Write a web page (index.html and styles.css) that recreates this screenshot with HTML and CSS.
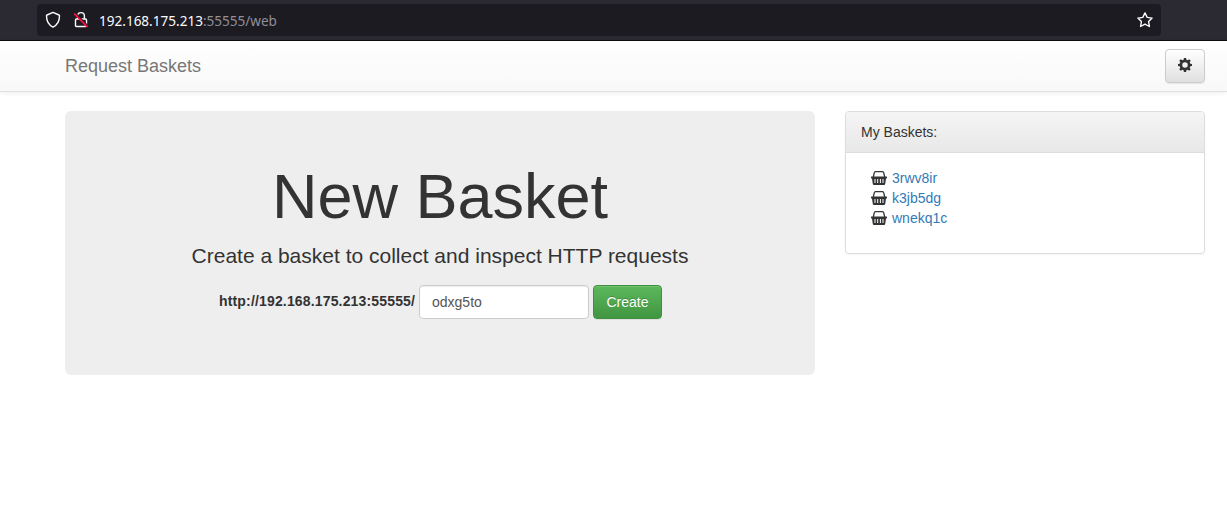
FILE: index.html
```html
<!DOCTYPE html>
<html lang="en">
<head>
<meta charset="utf-8">
<title>Request Baskets</title>
<link rel="stylesheet" href="styles.css">
</head>
<body>
<svg class="defs" width="0" height="0" aria-hidden="true">
  <symbol id="basket" viewBox="0 0 16 14">
    <path d="M2.300 6 3.300 1.700Q3.500.7 4.500.7h7q1 0 1.200 1L13.700 6" fill="none" stroke="#333" stroke-width="1.300"/>
    <path fill="#333" fill-rule="evenodd" d="M.5 5.500h15q.5 0 .5.500v1q0 .5-.500.500H15l-.8 5.500q-.2 1-1.200 1H3q-1 0-1.200-1L1 7.500H.5Q0 7.500 0 7V6Q0 5.500 .5 5.500zM3.500 8v4h1V8zM6.200 8v4h1V8zM8.900 8v4h1V8zM11.500 8v4h1V8z"/>
  </symbol>
</svg>
<div class="browser-bar">
  <div class="url-field">
    <svg class="shield" width="16" height="18" viewBox="0 0 16 18"><path d="M8 1.400 14 4q.5.200.5.800C14.500 10 12.700 13.900 8 16.100 3.300 13.900 1.500 10 1.500 4.800q0-.6.5-.8z" fill="none" stroke="#fbfbfe" stroke-width="1.400" stroke-linejoin="round"/></svg>
    <svg class="lock" width="16" height="18" viewBox="0 0 16 18"><path d="M4.600 8V5a3.400 3.400 0 0 1 6.800 0V8M3.500 8h9q1 0 1 1v5.500q0 1-1 1h-9q-1 0-1-1V9q0-1 1-1z" fill="none" stroke="#fbfbfe" stroke-width="1.400"/><path d="M2.500 2.200 14.800 14.700" stroke="#1c1b22" stroke-width="1.600"/><path d="M1.200 2.600 14.700 16.200" stroke="#ff0f3f" stroke-width="1.700"/></svg>
    <span class="url">192.168.175.213<span class="url-rest">:55555/web</span></span>
    <svg class="star" width="18" height="18" viewBox="0 0 18 18"><path d="m9 1.900 2.200 4.500 4.900.7-3.500 3.500.8 4.900L9 13.200l-4.400 2.300.8-4.900-3.500-3.500 4.900-.7z" fill="none" stroke="#fbfbfe" stroke-width="1.400" stroke-linejoin="round"/></svg>
  </div>
</div>
<nav class="navbar">
  <a class="brand">Request Baskets</a>
  <button class="btn btn-default" type="button" aria-label="Settings">
    <svg width="14" height="14" viewBox="-7 -7 14 14"><g fill="#333"><path id="teeth" d="M-1.100-7H1.100L1.600-4h-3.200zM-1.600 4h3.200L1.100 7H-1.100zM-7-1.100-4-1.600v3.200L-7 1.100zM4-1.600 7-1.100V1.100L4 1.600z"/><use href="#teeth" transform="rotate(45)"/></g><circle r="4.100" fill="none" stroke="#333" stroke-width="2.700"/></svg>
  </button>
</nav>
<main class="content">
  <section class="jumbotron">
    <h1>New Basket</h1>
    <p class="lead">Create a basket to collect and inspect HTTP requests</p>
    <form class="basket-form">
      <label for="name">http://192.168.175.213:55555/</label>
      <input id="name" class="form-control" type="text" value="odxg5to">
      <button class="btn btn-success" type="button">Create</button>
    </form>
  </section>
  <aside class="panel">
    <div class="panel-heading">My Baskets:</div>
    <ul class="baskets">
      <li><svg width="16" height="14"><use href="#basket"/></svg><a>3rwv8ir</a></li>
      <li><svg width="16" height="14"><use href="#basket"/></svg><a>k3jb5dg</a></li>
      <li><svg width="16" height="14"><use href="#basket"/></svg><a>wnekq1c</a></li>
    </ul>
  </aside>
</main>
</body>
</html>
```
FILE: styles.css
```css
* { box-sizing: border-box; }
body {
  margin: 0;
  background: #fff;
  color: #333;
  font: 14px/20px "Liberation Sans", Arial, sans-serif;
}
.defs { display: block; }
.browser-bar {
  height: 41px;
  padding: 4px 66px 0 37px;
  background: #2b2a33;
  border-bottom: 1px solid #0c0c0d;
}
.url-field {
  display: flex;
  align-items: center;
  height: 32px;
  padding: 0 7px 0 8px;
  background: #1c1b22;
  border-radius: 4px;
}
.lock { margin-left: 12px; }
.url {
  margin-left: 10px;
  padding-top: 2px;
  flex: 1;
  color: #fbfbfe;
  font: 13.55px/20px "Noto Sans", sans-serif;
}
.url-rest { color: #8f8f97; }
.navbar {
  display: flex;
  justify-content: space-between;
  height: 51px;
  padding: 8px 22px 0 65px;
  background: linear-gradient(#fff, #f8f8f8);
  border-bottom: 1px solid #e0e0e0;
  box-shadow: 0 1px 5px rgba(0, 0, 0, .075);
}
.brand {
  padding-top: 7px;
  color: #777;
  font-size: 18px;
  text-shadow: 0 1px 0 rgba(255, 255, 255, .25);
}
.btn {
  height: 34px;
  padding: 0 12px;
  border: 1px solid #ccc;
  border-radius: 4px;
  font: 14px/20px "Liberation Sans", Arial, sans-serif;
  box-shadow: inset 0 1px 0 rgba(255, 255, 255, .15), 0 1px 1px rgba(0, 0, 0, .075);
}
.btn-default {
  width: 40px;
  padding-bottom: 2px;
  background: linear-gradient(#fff, #e0e0e0);
}
.btn-default svg { display: block; }
.btn-success {
  width: 69px;
  color: #fff;
  background: linear-gradient(#5cb85c, #419641);
  border-color: #3e8f3e;
  text-shadow: 0 -1px 0 rgba(0, 0, 0, .2);
}
.content {
  display: grid;
  grid-template-columns: 750px 360px;
  gap: 30px;
  align-items: start;
  padding: 19px 22px 0 65px;
}
.jumbotron {
  height: 264px;
  padding: 51px 60px 0;
  background: #eee;
  border-radius: 6px;
  text-align: center;
}
h1 {
  margin: 0;
  font-size: 63px;
  font-weight: 500;
  line-height: 69px;
}
.lead {
  margin: 10px 0 14px;
  font-size: 21px;
  line-height: 30px;
}
.basket-form {
  display: flex;
  justify-content: center;
  align-items: center;
  gap: 4px;
  padding-left: 1px;
}
.basket-form label {
  width: 196px;
  font-weight: 700;
  letter-spacing: .16px;
  margin-top: -2px;
}
.form-control {
  width: 170px;
  height: 34px;
  padding: 6px 12px;
  border: 1px solid #ccc;
  border-radius: 4px;
  color: #555;
  background: #fff;
  font: 14px/20px "Liberation Sans", Arial, sans-serif;
  box-shadow: inset 0 1px 1px rgba(0, 0, 0, .075);
}
.panel {
  height: 143px;
  border: 1px solid #ddd;
  border-radius: 4px;
  box-shadow: 0 1px 2px rgba(0, 0, 0, .05);
}
.panel-heading {
  padding: 10px 15px;
  border-bottom: 1px solid #ddd;
  border-radius: 3px 3px 0 0;
  background: linear-gradient(#f5f5f5, #e8e8e8);
}
.baskets {
  margin: 0;
  padding: 15px 25px;
  list-style: none;
}
.baskets li {
  display: flex;
  align-items: center;
  gap: 5px;
}
.baskets a { color: #337ab7; }
```
